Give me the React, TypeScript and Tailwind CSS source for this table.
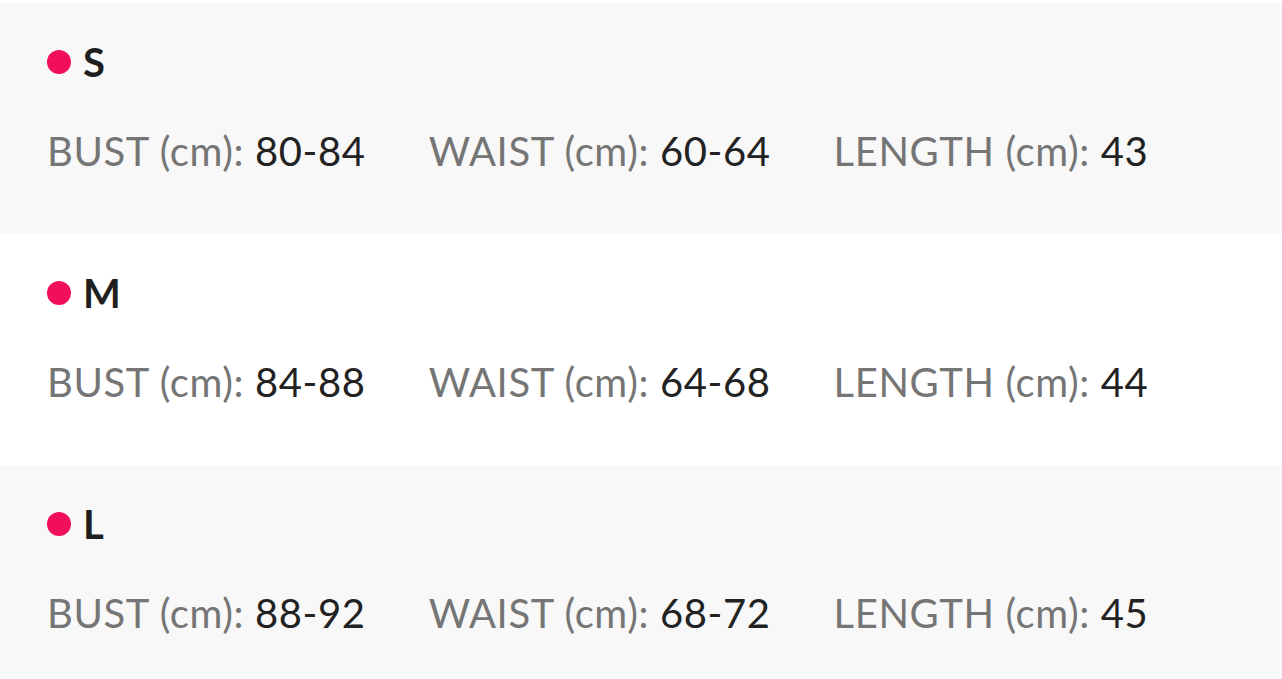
import React from 'react';

type Size = { name: string; bust: string; waist: string; length: string };

const sizes: Size[] = [
  { name: 'S', bust: '80-84', waist: '60-64', length: '43' },
  { name: 'M', bust: '84-88', waist: '64-68', length: '44' },
  { name: 'L', bust: '88-92', waist: '68-72', length: '45' },
];

const Measure: React.FC<{ label: string; value: string }> = ({ label, value }) => (
  <span className="whitespace-nowrap">
    <span className="text-[#757575]">{label} (cm): </span>
    <span className="text-[#222222]">{value}</span>
  </span>
);

export default function App() {
  return (
    <div
      className="w-[1282px] h-[679px] overflow-hidden bg-white pt-[3px]"
      style={{ fontFamily: 'Lato, "Open Sans", sans-serif' }}
    >
      {sizes.map((s, i) => (
        <div
          key={s.name}
          className={`h-[231px] pl-[47px] pt-[33px] ${i % 2 === 0 ? 'bg-[#f8f8f8]' : 'bg-white'}`}
        >
          {/* size header */}
          <div className="flex items-center gap-[12px] h-[52px]">
            <span className="w-[24px] h-[24px] rounded-full bg-[#f00f58]" />
            <span className="text-[40px] font-bold text-[#1f1f1f] leading-none">{s.name}</span>
          </div>

          {/* measurements */}
          <div className="flex gap-[63px] mt-[39px] text-[40px] leading-[48px] tracking-[0.6px]">
            <Measure label="BUST" value={s.bust} />
            <Measure label="WAIST" value={s.waist} />
            <Measure label="LENGTH" value={s.length} />
          </div>
        </div>
      ))}
    </div>
  );
}
